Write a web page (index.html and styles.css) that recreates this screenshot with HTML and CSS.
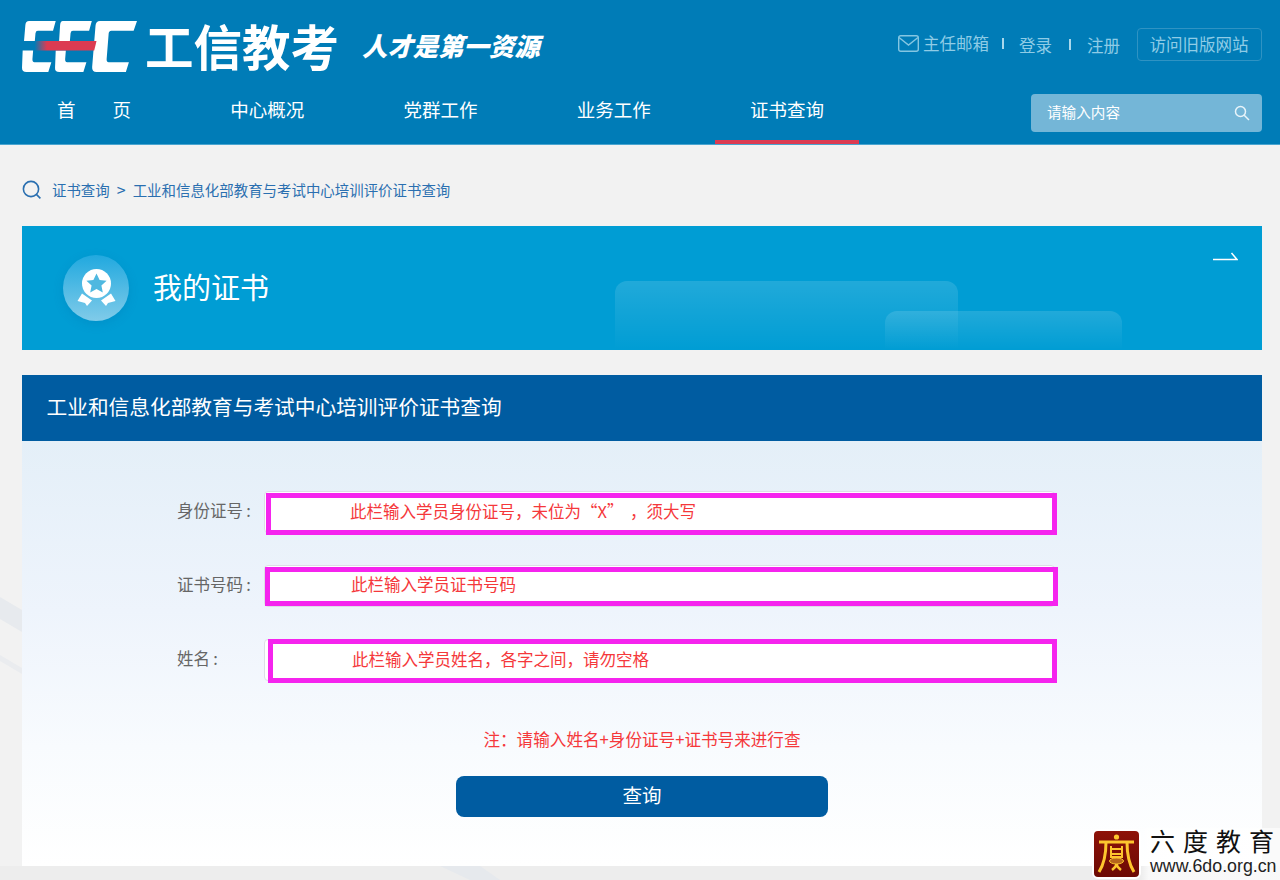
FILE: index.html
```html
<!DOCTYPE html>
<html lang="zh-CN">
<head>
<meta charset="utf-8">
<title>证书查询</title>
<link rel="stylesheet" href="styles.css">
</head>
<body>
<svg class="backdrop" width="1280" height="880" viewBox="0 0 1280 880" aria-hidden="true">
  <polygon points="0,597 22,610 22,632 0,619" fill="#e7eaee"/>
  <polygon points="0,655 22,668 22,674 0,661" fill="#eaecef"/>
  <polygon points="0,866 1280,866 1280,880 0,880" fill="#ededed"/>
  <polygon points="440,866 480,866 500,880 470,880" fill="#e6e9ed"/>
</svg>
<header class="site-header">
  <div class="header-top">
    <div class="brand">
      <svg class="brand-mark" width="115" height="51" viewBox="25 25 341 130" preserveAspectRatio="none" aria-label="CEC">
        <defs>
          <linearGradient id="redbar" x1="0" x2="1" y1="0" y2="0">
            <stop offset="0" stop-color="#dc3b52" stop-opacity="0"/>
            <stop offset=".2" stop-color="#dc3b52"/>
            <stop offset="1" stop-color="#dc3b52"/>
          </linearGradient>
        </defs>
        <g fill="#fff">
          <path d="M46 25H125L117 50H72Q66 50 65 56L63 76H31L35 35Q36 25 46 25Z"/>
          <path d="M27 100H58L56 122Q55 130 62 130H112L103 155H38Q25 155 25 144Z"/>
          <path d="M146 25H232L224 50H176Q170 50 169 56L167 76H135L138 35Q139 25 146 25Z"/>
          <path d="M125 100H155L153 122Q152 130 159 130H216L207 155H136Q122 155 123 144Z"/>
          <path d="M256 25H366L356 50H290Q283 50 282 57L276 122Q275 130 282 130H342L333 155H246Q232 155 233 142L243 37Q244 25 256 25Z"/>
        </g>
        <polygon points="65,76 246,76 239,100 62,100" fill="url(#redbar)"/>
      </svg>
      <span class="brand-name">工信教考</span>
      <span class="brand-slogan">人才是第一资源</span>
    </div>
    <div class="top-links">
      <a class="top-link mail-link">
        <svg width="21" height="17" viewBox="0 0 21 17" fill="none" stroke="#84c6e2" stroke-width="1.4" aria-hidden="true">
          <rect x=".7" y=".7" width="19.6" height="15.6" rx="2"/>
          <path d="M1 2.5L10.5 10L20 2.5"/>
        </svg>
        主任邮箱
      </a>
      <span class="top-sep sep-mail"></span>
      <a class="top-link login-link">登录</a>
      <span class="top-sep sep-login"></span>
      <a class="top-link reg-link">注册</a>
      <a class="old-site">访问旧版网站</a>
    </div>
  </div>
  <div class="header-nav">
    <nav class="nav">
      <a class="nav-item">首　　页</a>
      <a class="nav-item">中心概况</a>
      <a class="nav-item">党群工作</a>
      <a class="nav-item">业务工作</a>
      <a class="nav-item active">证书查询</a>
    </nav>
    <div class="search">
      <input class="search-input" placeholder="请输入内容">
      <svg width="16" height="16" viewBox="0 0 16 16" fill="none" stroke="#e8f4fa" stroke-width="1.5" aria-hidden="true">
        <circle cx="6.5" cy="6.5" r="5"/>
        <path d="M10.2 10.2L15 15"/>
      </svg>
    </div>
  </div>
</header>

<main class="main">
  <div class="crumbs">
    <svg width="20" height="20" viewBox="0 0 20 20" fill="none" stroke="#2a6fb0" stroke-width="1.6" aria-hidden="true">
      <circle cx="9" cy="9" r="7.6"/>
      <path d="M14.6 14.6L18.4 18.4"/>
    </svg>
    <span class="crumb">证书查询</span>
    <span class="crumb-sep">&gt;</span>
    <span class="crumb">工业和信息化部教育与考试中心培训评价证书查询</span>
  </div>

  <section class="hero">
    <div class="hero-glow glow-a"></div>
    <div class="hero-glow glow-b"></div>
    <div class="medal">
      <svg width="66" height="66" viewBox="0 0 66 66" aria-hidden="true">
        <circle cx="33.5" cy="28.5" r="14.5" fill="#fff"/>
        <polygon points="33.5,18.5 36.6,25 43.6,25.8 38.4,30.6 39.8,37.6 33.5,34 27.2,37.6 28.6,30.6 23.4,25.8 30.4,25" fill="#4fb8e0"/>
        <polygon points="19,38.5 29,45.5 24,51 22,48 14.5,46" fill="#fff"/>
        <polygon points="48,38.5 38,45.5 43,51 45,48 52.5,46" fill="#fff"/>
      </svg>
    </div>
    <h1 class="hero-title">我的证书</h1>
    <svg class="hero-arrow" width="25" height="10" viewBox="0 0 25 10" fill="none" stroke="#fff" stroke-width="1.5" aria-hidden="true">
      <path d="M0 7.5H24L18.5 1"/>
    </svg>
  </section>

  <section class="panel">
    <h2 class="panel-head">工业和信息化部教育与考试中心培训评价证书查询</h2>
    <form class="panel-body">
      <div class="row">
        <label class="row-label">身份证号&#8201;:</label>
        <div class="field">
          <input class="field-input">
          <div class="mark mark-id">此栏输入学员身份证号，未位为“X”&#8201;&#8201;，须大写</div>
        </div>
      </div>
      <div class="row">
        <label class="row-label">证书号码&#8201;:</label>
        <div class="field">
          <input class="field-input">
          <div class="mark mark-no">此栏输入学员证书号码</div>
        </div>
      </div>
      <div class="row">
        <label class="row-label">姓名&#8201;:</label>
        <div class="field">
          <input class="field-input">
          <div class="mark mark-name">此栏输入学员姓名，各字之间，请勿空格</div>
        </div>
      </div>
      <p class="note">注：请输入姓名+身份证号+证书号来进行查</p>
      <button class="submit" type="button">查询</button>
    </form>
  </section>
</main>

<aside class="watermark">
  <svg class="wm-logo" width="49" height="50" viewBox="0 0 49 50" aria-hidden="true">
    <defs>
      <linearGradient id="wmred" x1="0" x2="0" y1="0" y2="1">
        <stop offset="0" stop-color="#8e1208"/>
        <stop offset="1" stop-color="#6b0a04"/>
      </linearGradient>
    </defs>
    <rect x="1" y="1" width="47" height="48" rx="5" fill="url(#wmred)" stroke="#fff" stroke-width="2"/>
    <g fill="none" stroke="#fdc62e" stroke-width="2.4">
      <circle cx="24.5" cy="8" r="2.6" fill="#fdc62e" stroke="none"/>
      <path d="M7 13H42" stroke-width="3"/>
      <path d="M14 13Q14 32 7 43" stroke-width="3"/>
      <path d="M35 13Q35 32 42 43" stroke-width="3"/>
      <path d="M19 20H30M19 25H30" stroke-width="2"/>
      <path d="M19 17V28H30V17" stroke-width="2"/>
      <path d="M20 41Q24 38 24.5 35M29 41Q25 38 24.5 35" stroke-width="2.4"/>
    </g>
    <ellipse cx="24.5" cy="32" rx="7" ry="3" fill="#b5651d" stroke="#fdc62e"/>
  </svg>
  <div class="wm-text">
    <div class="wm-name">六度教育</div>
    <div class="wm-url">www.6do.org.cn</div>
  </div>
</aside>
</body>
</html>
```

FILE: styles.css
```css
* { box-sizing: border-box; }

html, body {
  margin: 0;
  padding: 0;
  height: 880px;
  overflow: hidden;
}

body {
  position: relative;
  background: #f2f2f2;
  font-family: "Noto Sans CJK SC", "Noto Sans", sans-serif;
  color: #666;
}

.backdrop {
  position: absolute;
  left: 0;
  top: 0;
}

/* header */
.site-header {
  position: relative;
  height: 145px;
  background: #007cb7;
  border-bottom: 1px solid #4aa5d0;
}

.header-top {
  height: 92px;
  display: flex;
  justify-content: space-between;
  padding: 0 18px 0 22px;
}

.brand {
  display: flex;
  align-items: flex-start;
}

.brand-mark {
  margin-top: 21px;
  flex: none;
}

.brand-name {
  margin: 11px 0 0 8px;
  font-size: 48.5px;
  line-height: 68px;
  font-weight: 700;
  color: #fff;
  white-space: nowrap;
}

.brand-slogan {
  margin: 26px 0 0 23px;
  font-size: 25.4px;
  line-height: 38px;
  font-weight: 900;
  font-style: italic;
  color: #fff;
  white-space: nowrap;
}

.top-links {
  display: flex;
  align-items: flex-start;
  color: #8fcce6;
}

.top-link {
  display: flex;
  align-items: center;
  font-size: 16.5px;
  line-height: 24px;
  white-space: nowrap;
}

.mail-link { margin-top: 31px; gap: 4px; }
.login-link { margin: 33px 0 0 15px; }
.reg-link { margin: 33px 0 0 16px; }

.top-sep {
  width: 2px;
  height: 11px;
  background: #a9d8ec;
}

.sep-mail { margin: 38px 0 0 13px; }
.sep-login { margin: 39px 0 0 17px; }

.old-site {
  margin: 28px 0 0 17px;
  width: 125px;
  height: 33px;
  padding-right: 1px;
  border: 1px solid #2f93c3;
  border-radius: 4px;
  font-size: 16.5px;
  line-height: 30px;
  text-align: center;
  white-space: nowrap;
}

.header-nav {
  height: 52px;
  display: flex;
  justify-content: space-between;
  padding: 0 18px 0 22px;
}

.nav {
  display: flex;
  gap: 29.25px;
}

.nav-item {
  width: 144px;
  height: 52px;
  font-size: 18.5px;
  line-height: 34px;
  text-align: center;
  color: #fff;
  white-space: nowrap;
}

.nav-item.active {
  border-bottom: 4px solid #dc3b52;
}

.search {
  width: 231px;
  height: 38px;
  margin-top: 2px;
  padding: 0 12px 0 16px;
  display: flex;
  align-items: center;
  background: #74b6d7;
  border-radius: 4px;
}

.search-input {
  flex: 1;
  min-width: 0;
  height: 34px;
  margin-bottom: 4px;
  border: 0;
  outline: 0;
  padding: 0;
  background: transparent;
  font: 14.6px "Noto Sans CJK SC", sans-serif;
  color: #fff;
}

.search-input::placeholder {
  color: #fff;
  opacity: 1;
}

/* main */
.main {
  position: relative;
  padding: 0 18px 0 22px;
}

.crumbs {
  height: 81px;
  display: flex;
  align-items: center;
  padding-top: 7px;
  font-size: 14.45px;
  color: #2a6fb0;
}

.crumbs svg { margin: 2px 10px 0 0; flex: none; }
.crumb { white-space: nowrap; }
.crumb-sep { margin: 0 7px; font-size: 16px; line-height: 20px; }

.hero {
  position: relative;
  height: 124px;
  margin-bottom: 25px;
  padding-left: 41px;
  display: flex;
  align-items: center;
  gap: 24px;
  overflow: hidden;
  background: #009dd4;
}

.hero-glow {
  position: absolute;
  bottom: 0;
  border-radius: 12px 12px 0 0;
  background: linear-gradient(rgba(255,255,255,.13), rgba(255,255,255,0));
}

.glow-a { left: 593px; width: 343px; height: 69px; }
.glow-b { left: 863px; width: 237px; height: 39px; }

.medal {
  position: relative;
  width: 66px;
  height: 66px;
  flex: none;
  border-radius: 50%;
  background: linear-gradient(#21a9df, #80cbe9);
  box-shadow: 0 3px 10px rgba(0, 110, 170, .25);
}

.medal svg { display: block; }

.hero-title {
  position: relative;
  margin: 0 0 4px;
  font-size: 29px;
  line-height: 40px;
  font-weight: 400;
  color: #fff;
}

.hero-arrow {
  position: absolute;
  right: 24px;
  top: 26px;
}

.panel-head {
  height: 66px;
  margin: 0;
  padding-left: 24.5px;
  background: #005ca1;
  font-size: 20.7px;
  line-height: 63px;
  font-weight: 400;
  color: #fff;
  white-space: nowrap;
}

.panel-body {
  height: 425px;
  padding-top: 50px;
  display: flex;
  flex-direction: column;
  align-items: center;
  background: linear-gradient(#e4eff8, #eef4fc 40%, #f8fbfe 72%, #fff 100%);
}

.row {
  width: 100%;
  height: 42px;
  margin-bottom: 32px;
  padding-left: 155px;
  display: flex;
  align-items: center;
}

.row-label {
  width: 87px;
  flex: none;
  padding-bottom: 4px;
  font-size: 16.5px;
  color: #666;
  white-space: nowrap;
}

.field {
  position: relative;
  width: 791px;
  height: 42px;
}

.field-input {
  display: block;
  width: 100%;
  height: 100%;
  border: 1px solid #dcdfe6;
  border-radius: 4px;
  background: #fff;
}

.mark {
  position: absolute;
  display: flex;
  align-items: center;
  border: 5px solid #f524ee;
  background: #fff;
  font-size: 16.5px;
  color: #f5383b;
  white-space: nowrap;
}

.mark-id { left: 2px; top: 2px; width: 791px; height: 42px; padding: 0 0 6px 79px; }
.mark-no { left: 1px; top: 2px; width: 793px; height: 39px; padding: 0 0 6px 81px; }
.mark-name { left: 4px; top: 0; width: 789px; height: 44px; padding: 0 0 4px 79px; }

.note {
  margin: 14px 0 25px;
  font-size: 16.6px;
  line-height: 24px;
  color: #f5383b;
  white-space: nowrap;
}

.submit {
  width: 372px;
  height: 41px;
  padding: 0 0 4px;
  border: 0;
  border-radius: 8px;
  background: #005ca1;
  font: 19.5px "Noto Sans CJK SC", sans-serif;
  color: #fff;
}

/* corner watermark */
.watermark {
  position: absolute;
  right: 0;
  bottom: 0;
  width: 188px;
  height: 52px;
  display: flex;
  gap: 9px;
  align-items: flex-start;
  background: linear-gradient(90deg, rgba(255,255,255,0) 26%, rgba(255,255,255,.65) 30%);
}

.wm-logo {
  flex: none;
  margin-top: 1px;
}

.wm-name {
  font-size: 25px;
  line-height: 24px;
  letter-spacing: 8px;
  color: #111;
  white-space: nowrap;
}

.wm-url {
  margin-top: 2px;
  font-family: "Liberation Sans", Arial, sans-serif;
  font-size: 17.8px;
  line-height: 24px;
  color: #222;
  white-space: nowrap;
}
```
